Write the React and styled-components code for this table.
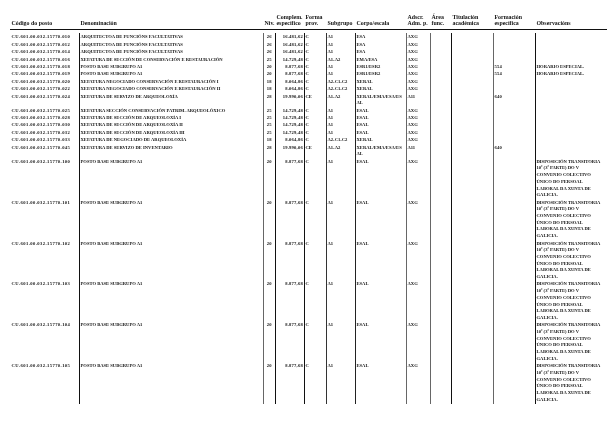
import * as React from "react";
import styled, { createGlobalStyle } from "styled-components";

const GlobalStyle = createGlobalStyle`
  html, body {
    margin: 0;
    padding: 0;
    background: #ffffff;
  }
  body {
    font-family: "Liberation Serif", "Times New Roman", serif;
    font-weight: bold;
    color: #111;
  }
`;

// column widths follow the printed form, lines are the rules between columns
const columns = [
  { key: "code", width: 69, line: null, spacing: 0.42 },
  { key: "name", width: 184, line: "#111" },
  { key: "level", width: 12, line: "#666", align: "center", spacing: 0.2 },
  { key: "complement", width: 29, line: "#111", align: "right", spacing: 0.22 },
  { key: "form", width: 22, line: "#111" },
  { key: "subgroup", width: 29, line: "#333" },
  { key: "body", width: 51, line: "#222" },
  { key: "adm", width: 24, line: "#666" },
  { key: "area", width: 21, line: "#666" },
  { key: "degree", width: 42, line: "#111" },
  { key: "training", width: 42, line: "#666", spacing: 0.2 },
  { key: "notes", width: 72, line: "#111" },
];

const template = columns.map((c) => `${c.width}px`).join(" ");

const headers = [
  ["Código do posto"],
  ["Denominación"],
  ["Niv."],
  ["Complem.", "específico"],
  ["Forma", "prov."],
  ["Subgrupo"],
  ["Corpo/escala"],
  ["Adscr.", "Adm. p."],
  ["Área", "func."],
  ["Titulación", "académica"],
  ["Formación", "específica"],
  ["Observacións"],
];

const transitoria = [
  "DISPOSICIÓN TRANSITORIA",
  "10ª (3ª PARTE) DO V",
  "CONVENIO COLECTIVO",
  "ÚNICO DO PERSOAL",
  "LABORAL DA XUNTA DE",
  "GALICIA.",
];

const arq = ["ARQUITECTOA DE FUNCIÓNS FACULTATIVAS", "26", "16.481,62", "C", "A1", "ESA", "AXG", "", "", "", ""];
const seccion = (name) => [name, "25", "14.729,48", "C", "A1", "ESAL", "AXG", "", "", "", ""];
const base = ["POSTO BASE SUBGRUPO A1", "20", "8.877,68", "C", "A1", "ESAL", "AXG", "", "", "", transitoria];
const especial = ["POSTO BASE SUBGRUPO A1", "20", "8.877,68", "C", "A1", "ESR1/ESR2", "AXG", "", "", "554", "HORARIO ESPECIAL."];
const negociado = (name) => [name, "18", "8.064,86", "C", "A2-C1-C2", "XERAL", "AXG", "", "", "", ""];
const servizo = (name) => [name, "28", "19.990,06", "CE", "A1-A2", ["XERAL/EMA/ESA/ES", "AL"], "A11", "", "", "640", ""];

const rows = [
  ["010", arq],
  ["012", arq],
  ["014", arq],
  ["016", ["XEFATURA DE SECCIÓN DE CONSERVACIÓN E RESTAURACIÓN", "25", "14.729,48", "C", "A1-A2", "EMA/ESA", "AXG", "", "", "", ""]],
  ["018", especial],
  ["019", especial],
  ["020", negociado("XEFATURA NEGOCIADO CONSERVACIÓN E RESTAURACIÓN I")],
  ["022", negociado("XEFATURA NEGOCIADO CONSERVACIÓN E RESTAURACIÓN II")],
  ["024", servizo("XEFATURA DE SERVIZO DE ARQUEOLOXÍA")],
  ["025", seccion("XEFATURA SECCIÓN CONSERVACIÓN PATRIM. ARQUEOLÓXICO")],
  ["028", seccion("XEFATURA DE SECCIÓN DE ARQUEOLOXÍA I")],
  ["030", seccion("XEFATURA DE SECCIÓN DE ARQUEOLOXÍA II")],
  ["032", seccion("XEFATURA DE SECCIÓN DE ARQUEOLOXÍA III")],
  ["033", negociado("XEFATURA DE NEGOCIADO DE ARQUEOLOXÍA")],
  ["045", servizo("XEFATURA DE SERVIZO DE INVENTARIO")],
  ["100", base],
  ["101", base],
  ["102", base],
  ["103", base],
  ["104", base],
  ["105", base],
];

const Page = styled.div`
  padding: 13.7px 8px 0 10px;
  will-change: transform;
`;

const HeaderRow = styled.div`
  display: grid;
  grid-template-columns: ${template};
  align-items: end;
  border-bottom: 1px solid #111;
  padding-bottom: 2px;
  margin-bottom: 3px;
`;

const HeaderCell = styled.div`
  font-size: 5.9px;
  line-height: 6.8px;
  padding-left: 1.5px;
  white-space: nowrap;
`;

const Row = styled.div`
  display: grid;
  grid-template-columns: ${template};
`;

const Cell = styled.div`
  font-size: 4.6px;
  line-height: 6.7px;
  padding: ${(p) => (p.$first ? "1.2px" : "0.35px")} 1px 0.35px 1.5px;
  white-space: nowrap;
  letter-spacing: ${(p) => p.$spacing || 0}px;
  text-align: ${(p) => p.$align || "left"};
  box-shadow: ${(p) => (p.$line ? `inset 1px 0 0 ${p.$line}` : "none")};
`;

const Lines = ({ value }) =>
  Array.isArray(value)
    ? value.map((line, i) => (
        <React.Fragment key={i}>
          {i > 0 && <br />}
          {line}
        </React.Fragment>
      ))
    : value;

export default function App() {
  return (
    <>
      <GlobalStyle />
      <Page>
        <HeaderRow>
          {headers.map((h, i) => (
            <HeaderCell key={i}>
              <Lines value={h} />
            </HeaderCell>
          ))}
        </HeaderRow>
        {rows.map(([num, data], r) => {
          const values = [`CU.601.00.032.15770.${num}`, ...data];
          return (
            <Row key={num}>
              {columns.map((c, i) => (
                <Cell
                  key={c.key}
                  $line={c.line}
                  $align={c.align}
                  $spacing={c.spacing}
                  $first={r === 0}
                >
                  <Lines value={values[i]} />
                </Cell>
              ))}
            </Row>
          );
        })}
      </Page>
    </>
  );
}
